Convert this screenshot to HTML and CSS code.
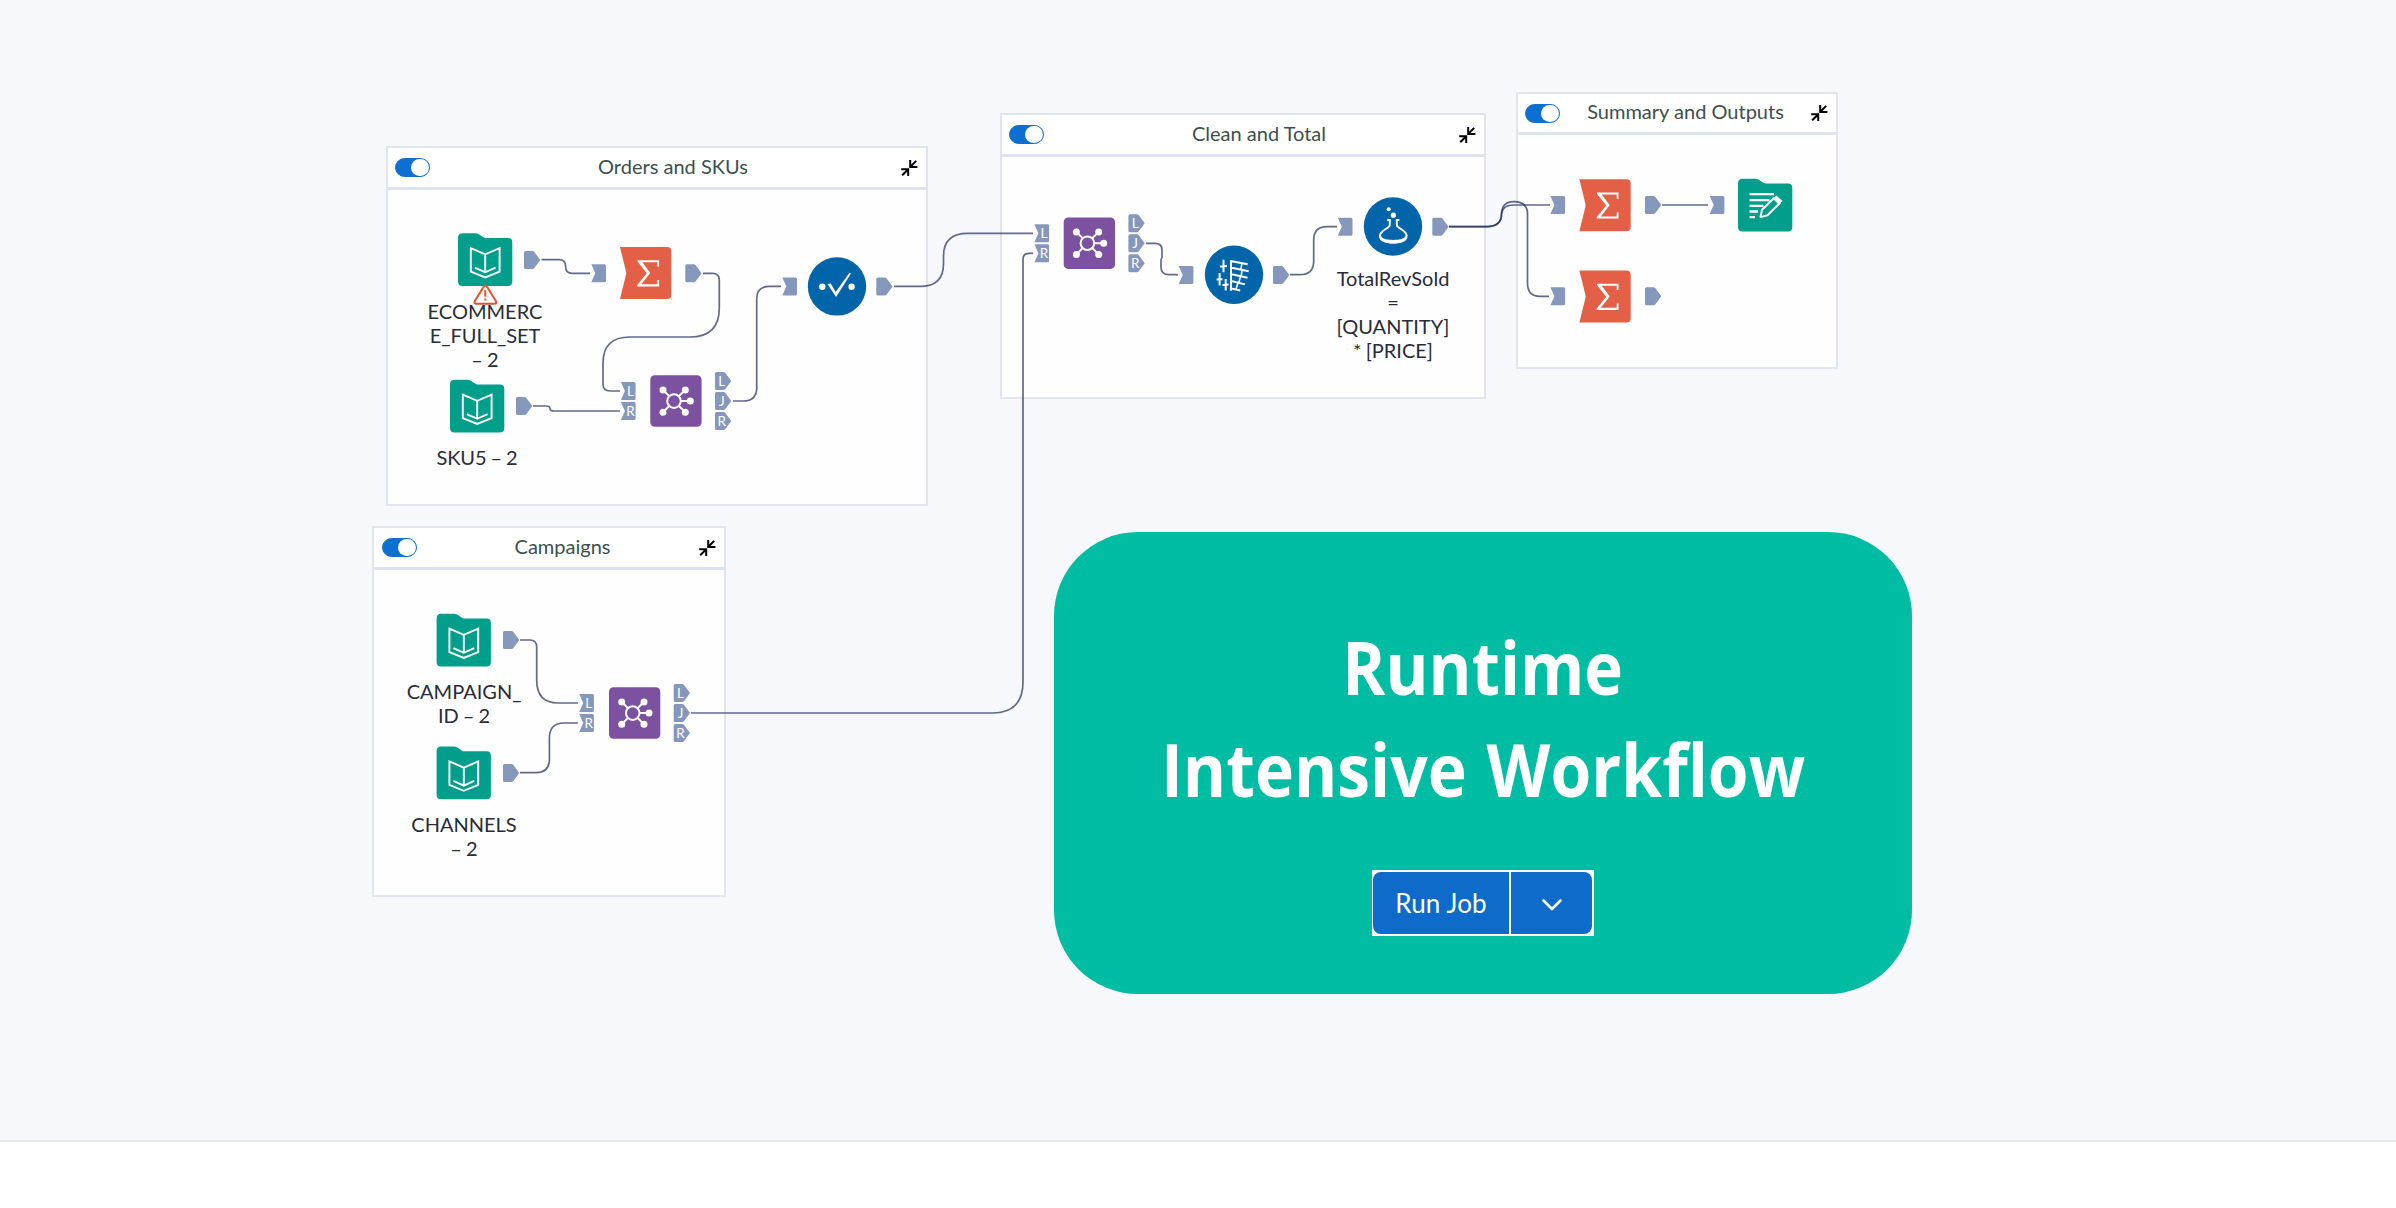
FILE: index.html
```html
<!DOCTYPE html>
<html lang="en">
<head>
<meta charset="utf-8">
<title>Runtime Intensive Workflow</title>
<link rel="stylesheet" href="styles.css">
</head>
<body>
<svg class="defs" aria-hidden="true">
  <defs>
    <symbol id="collapse" viewBox="0 0 17 16"><path d="M9.2 0V6.9H16.4M9.6 6.5L15.2 .9M.2 9.3H7.2V16M6.8 9.7L1.2 15.3" fill="none" stroke="#000" stroke-width="2"/></symbol>
    <path id="folder" d="M4.5 0H17.5Q20 0 22 1.6L25 3.8Q26.500 4.700 28 4.700H50Q54.300 4.700 54.300 9V48.200Q54.300 52.700 49.800 52.700H4.500Q0 52.700 0 48.200V4.500Q0 0 4.500 0Z" fill="#029e8c"/>
    <g id="input-tool">
      <use href="#folder"/>
      <path d="M12.800 14.800L27.200 21L41.600 14.800V38.300L27.200 44.200L12.800 38.300ZM27.200 21V38.600M16.800 34.300L27.200 39L37.600 34.300" fill="none" stroke="#fff" stroke-width="1.900"/>
    </g>
    <g id="output-tool">
      <use href="#folder"/>
      <path d="M11.500 15.300H36M11.500 21.300H31.500M11.500 27H25.500M11.500 32.700H20M11.500 38.300H17" stroke="#fff" stroke-width="2.300"/>
      <path d="M22.500 38.300L24 31L36 19.200L41.600 24.400L29.500 36.500Z" fill="#029e8c" stroke="#fff" stroke-width="2" stroke-linejoin="round"/>
      <path d="M35 20.200L38.300 16.600L44.500 22.200L40.700 25.800Z" fill="#fff"/>
      <path d="M27 33.500L36.500 24" stroke="#029e8c" stroke-width="1.500"/>
    </g>
    <g id="sum-tool">
      <path d="M0 0H47Q51.300 0 51.300 4.300V47.700Q51.300 52 47 52H0L5.900 28Q6.500 26 5.900 24Z" fill="#e35f45"/>
      <path d="M17.500 13.200H39.100V19.600H37.300V15.300H22.300L30.300 26L21.300 37.300H37.300V33H39.100V39.400H17.300V38L26.800 26.200L17.500 14.600Z" fill="#fff"/>
    </g>
    <g id="join-tool">
      <rect width="51.300" height="51.500" rx="4.500" fill="#7c52a0"/>
      <path d="M12.700 14.500L23.700 25.800L35 14.500M12.700 37L23.700 25.800L35 37M23.700 25.800H40" fill="none" stroke="#fff" stroke-width="2"/>
      <circle cx="23.700" cy="25.800" r="6.800" fill="#7c52a0" stroke="#fff" stroke-width="2"/>
      <g fill="#fff"><circle cx="12.700" cy="14.600" r="3.500"/><circle cx="35" cy="14.600" r="3.500"/><circle cx="40" cy="25.800" r="3.500"/><circle cx="35" cy="37" r="3.500"/><circle cx="12.700" cy="37" r="3.500"/></g>
    </g>
    <g id="select-tool">
      <circle r="29.200" fill="#0264a9"/>
      <circle cx="-14.700" cy=".3" r="3.200" fill="#fff"/><circle cx="14.600" cy=".3" r="3.200" fill="#fff"/>
      <path d="M-9.500 -2.500L-6.200 -3L-1.300 5.500L12.500 -13.700L14 -13L-.900 10.600Z" fill="#fff"/>
    </g>
    <g id="cleanse-tool">
      <circle r="29.200" fill="#0264a9"/>
      <path d="M-3 -14.500V16M-3.500 -13.600L13.700 -10.400M-3.500 -7.200L14.700 -3.400M-3.500 -.700L13.500 3.100M-3.500 6L10.900 9.700M-3.500 13.600L6.200 15.700M-10.500 -15V-2.400M-14.400 -1.800V10.700M-8.300 4.200V15.800M-14 -8.300L-7 -8.700M-17.400 4.800L-11.500 4.500M-11.600 10.300L-5.400 9.900" fill="none" stroke="#fff" stroke-width="2"/>
      <path d="M8 -11.500L6.800 -5M8.300 -5L7 1.700M6.500 1.700L4.800 8M4 8L2 14.500" fill="none" stroke="#fff" stroke-width="1.600"/>
    </g>
    <g id="formula-tool">
      <circle r="29.200" fill="#0264a9"/>
      <circle cx="-4.300" cy="-17.200" r="2" fill="#fff"/><circle cx=".400" cy="-11.300" r="2.600" fill="#fff"/>
      <path d="M-5.800 -6.600H-3.200V-1.800C-3.200 2-13 3.500-13 9.300C-13 14-7.500 16 .300 16S13.600 14 13.600 9.300C13.600 3.500 3.800 2 3.800 -1.800V-6.600H6.400" fill="none" stroke="#fff" stroke-width="2"/>
      <path d="M-13.500 8.500C-10 13 -5 13.400 .300 13.400S10.500 13 14.100 8.500C14.500 14.500 8 17 .300 17S-14 14.500 -13.500 8.500Z" fill="#fff"/>
    </g>
    <path id="out" d="M1.500 0H8.500Q9.700 0 10.400 1L16.300 9L10.400 17Q9.700 18 8.500 18H1.500Q0 18 0 16.500V1.500Q0 0 1.500 0Z" fill="#8598bc"/>
    <path id="in" d="M0 0H13.200Q14.700 0 14.700 1.500V16.500Q14.700 18 13.200 18H0L4 9Z" fill="#8598bc"/>
    <g id="join-in"><use href="#in"/><text x="9.600" y="13.600">L</text><use href="#in" y="20"/><text x="9.600" y="33.600">R</text></g>
    <g id="join-out"><use href="#out"/><text x="6.800" y="13.600">L</text><use href="#out" y="20"/><text x="6.800" y="33.600">J</text><use href="#out" y="40"/><text x="6.800" y="53.600">R</text></g>
  </defs>
</svg>

<main class="canvas">
  <section class="panel orders">
    <header class="panel-head"><span class="toggle"></span><h2 class="panel-title">Orders and SKUs</h2><svg class="collapse"><use href="#collapse"/></svg></header>
  </section>
  <section class="panel campaigns">
    <header class="panel-head"><span class="toggle"></span><h2 class="panel-title">Campaigns</h2><svg class="collapse"><use href="#collapse"/></svg></header>
  </section>
  <section class="panel clean">
    <header class="panel-head"><span class="toggle"></span><h2 class="panel-title">Clean and Total</h2><svg class="collapse"><use href="#collapse"/></svg></header>
  </section>
  <section class="panel summary">
    <header class="panel-head"><span class="toggle"></span><h2 class="panel-title">Summary and Outputs</h2><svg class="collapse"><use href="#collapse"/></svg></header>
  </section>

  <svg class="diagram" width="2396" height="1140">
    <g class="edges">
      <path d="M541.500 259.700H559Q565.600 259.700 565.600 266.500Q565.600 273.300 572 273.300H590"/>
      <path d="M703 273.300H712.500Q719.300 273.300 719.300 280V308Q719.300 337 690 337H630Q603 337 603 363V384Q603 391 610 391H620"/>
      <path d="M533 406H546Q550 406 550 408.500Q550 411 554 411H620"/>
      <path d="M733 401H743Q756.700 401 756.700 388V299Q756.700 286.400 769 286.400H781"/>
      <path d="M894 286.400H920Q943.500 286.400 943.500 264V256Q943.500 233.400 968 233.400H1033"/>
      <path d="M691 713H992Q1023 713 1023 682V259Q1023 253.400 1029 253.400H1033"/>
      <path d="M520 640H530Q536.700 640 536.700 647V680Q536.700 703 558 703H578"/>
      <path d="M520 772.700H536Q549.400 772.700 549.400 759V738Q549.400 723 564 723H578"/>
      <path d="M1146 243.400H1155Q1162 243.400 1162 250V257.500Q1161 258.500 1161 261V267Q1161 274.700 1169 274.700H1178"/>
      <path d="M1290 274.700H1300Q1313.700 274.700 1313.700 261V240Q1313.700 226.600 1327 226.600H1337"/>
      <path d="M1449 226.600H1487Q1501.500 226.600 1501.500 214Q1502.500 205 1514 205H1550"/>
      <path d="M1449 226.600H1487Q1501.500 226.600 1501.500 214Q1502 201.700 1514 201.700Q1527.500 201.700 1527.500 214V283Q1527.500 296.400 1540 296.400H1549"/>
      <path d="M1662 205H1708"/>
    </g>
    <use href="#input-tool" x="458" y="233.300"/><use href="#input-tool" x="450" y="379.800"/>
    <use href="#input-tool" x="436.600" y="613.800"/><use href="#input-tool" x="436.600" y="746.600"/>
    <use href="#output-tool" x="1738" y="178.800"/>
    <use href="#sum-tool" x="620" y="247"/><use href="#sum-tool" x="1579.400" y="179.200"/><use href="#sum-tool" x="1579.400" y="270.500"/>
    <use href="#join-tool" x="650.300" y="375.300"/><use href="#join-tool" x="609" y="687.300"/><use href="#join-tool" x="1063.700" y="217.400"/>
    <use href="#select-tool" x="837" y="286.400"/><use href="#cleanse-tool" x="1234" y="274.700"/><use href="#formula-tool" x="1393" y="226.500"/>

    <use href="#out" x="524" y="251"/><use href="#out" x="516" y="397"/><use href="#out" x="685.300" y="264.200"/>
    <use href="#out" x="876.300" y="277.400"/><use href="#out" x="503" y="631"/><use href="#out" x="503" y="764"/>
    <use href="#out" x="1273" y="266"/><use href="#out" x="1432.300" y="217.700"/><use href="#out" x="1645" y="196"/><use href="#out" x="1645" y="287.300"/>
    <use href="#in" x="591.300" y="264.200"/><use href="#in" x="782.300" y="277.400"/><use href="#in" x="1178.700" y="266"/>
    <use href="#in" x="1337.800" y="217.700"/><use href="#in" x="1550.400" y="196"/><use href="#in" x="1550.400" y="287.300"/><use href="#in" x="1709.700" y="196"/>
    <g class="port-text">
      <use href="#join-in" x="620.900" y="382"/><use href="#join-in" x="579.200" y="694"/><use href="#join-in" x="1034.400" y="224.300"/>
      <use href="#join-out" x="715" y="372"/><use href="#join-out" x="673.700" y="684"/><use href="#join-out" x="1128.400" y="214.300"/>
    </g>
    <g fill="none" stroke="#dd5330">
      <path d="M485.300 285.500Q486.300 285.500 487 286.700L496 301.300Q497 303.700 494.500 303.700H476.200Q473.700 303.700 474.700 301.300L483.700 286.700Q484.400 285.500 485.300 285.500Z" fill="#fff" stroke-width="2"/>
      <path d="M485.300 290.300V296.800M485.300 298.600V300.600" stroke-width="2"/>
    </g>
  </svg>

  <p class="label ecommerce">ECOMMERC<br>E_FULL_SET<br>– 2</p>
  <p class="label sku">SKU5 – 2</p>
  <p class="label campaign">CAMPAIGN_<br>ID – 2</p>
  <p class="label channels">CHANNELS<br>– 2</p>
  <p class="label formula">TotalRevSold<br>=<br>[QUANTITY]<br>* [PRICE]</p>

  <section class="callout">
    <h1 class="callout-title"><span class="line-one">Runtime</span><br><span class="line-two">Intensive Workflow</span></h1>
    <div class="run-frame">
      <button class="run-job">Run Job</button>
      <button class="run-more" aria-label="More run options"><svg width="22" height="14" viewBox="0 0 22 14"><path d="M2.500 2.500L11 11L19.500 2.500" fill="none" stroke="#fff" stroke-width="2.600" stroke-linecap="round" stroke-linejoin="round"/></svg></button>
    </div>
  </section>
</main>
</body>
</html>
```
FILE: styles.css
```css
body {
  margin: 0;
  background: #fff;
  font-family: Lato, "Liberation Sans", sans-serif;
  overflow: hidden;
}

h1, h2, p { margin: 0; }

.defs { position: absolute; width: 0; height: 0; }

.canvas {
  position: relative;
  height: 1140px;
  background: #f7f8fc;
  border-bottom: 2px solid #e8e9ed;
}

/* Workflow containers */
.panel {
  position: absolute;
  box-sizing: border-box;
  background: #fefefe;
  border: 2px solid #e0e5f0;
}
.orders { left: 386px; top: 146px; width: 542px; height: 360px; }
.campaigns { left: 372px; top: 526px; width: 354px; height: 371px; }
.clean { left: 1000px; top: 113px; width: 486px; height: 286px; }
.summary { left: 1516px; top: 92px; width: 322px; height: 277px; }

.panel-head {
  display: flex;
  align-items: center;
  box-sizing: border-box;
  height: 42px;
  padding: 0 8px 0 7px;
  border-bottom: 3px solid #dde3f0;
  background: #fff;
}
.summary .panel-head { height: 41px; }
.toggle {
  display: flex;
  justify-content: flex-end;
  box-sizing: border-box;
  width: 35px;
  height: 19px;
  border: 1px solid #0d6fd1;
  border-radius: 10px;
  background: #0d6fd1;
}
.toggle::after {
  content: "";
  width: 18px;
  height: 17px;
  border-radius: 9px;
  background: #fff;
}
.panel-title {
  flex: 1;
  padding: 0 0 4px 15px;
  text-align: center;
  white-space: nowrap;
  font-size: 20px;
  line-height: 24px;
  font-weight: 400;
  color: #3c4f4e;
}
.campaigns .panel-title { padding-left: 9px; }
.summary .panel-title { padding-left: 0; }
.campaigns .panel-head { padding-left: 8px; }
.collapse { width: 17px; height: 16px; }

/* Tools and connections */
.diagram { position: absolute; left: 0; top: 0; }
.edges path {
  fill: none;
  stroke: #26315f;
  stroke-opacity: .72;
  stroke-width: 1.700px;
}
.port-text {
  font-size: 13.500px;
  fill: #fff;
  text-anchor: middle;
}

.label {
  position: absolute;
  width: 140px;
  text-align: center;
  font-size: 20px;
  line-height: 24px;
  word-spacing: -1px;
  color: #282c37;
}
.ecommerce { left: 415px; top: 299px; }
.sku { left: 407px; top: 445px; letter-spacing: -.1px; }
.campaign { left: 394px; top: 679px; }
.channels { left: 394px; top: 812px; }
.formula { left: 1323px; top: 266px; }

/* Callout card */
.callout {
  position: absolute;
  left: 1054px;
  top: 532px;
  box-sizing: border-box;
  width: 858px;
  height: 462px;
  padding-top: 84px;
  display: flex;
  flex-direction: column;
  align-items: center;
  border-radius: 84px;
  background: #00bca2;
}
.callout-title {
  height: 254px;
  text-align: center;
  white-space: nowrap;
  font-family: "Trebuchet MS", "Open Sans", "Noto Sans", sans-serif;
  font-size: 74px;
  line-height: 102px;
  font-weight: 700;
  color: #fff;
}
.line-one, .line-two { display: inline-block; }
.line-one { transform: scaleX(.885); }
.line-two { word-spacing: 3px; transform: scaleX(.892); }
.run-frame {
  display: flex;
  gap: 2px;
  box-sizing: border-box;
  width: 222px;
  height: 66px;
  padding: 2px 2px 2px 1px;
  background: #fff;
}
.run-frame button {
  display: flex;
  align-items: center;
  justify-content: center;
  border: 0;
  padding: 0;
  background: #0e6bca;
  color: #fff;
  font: 400 26px/32px Lato, sans-serif;
  letter-spacing: .15px;
}
.run-frame .run-job { width: 136px; border-radius: 8px 0 0 8px; }
.run-frame .run-more { flex: 1; padding-top: 3px; border-radius: 0 8px 8px 0; }
```
